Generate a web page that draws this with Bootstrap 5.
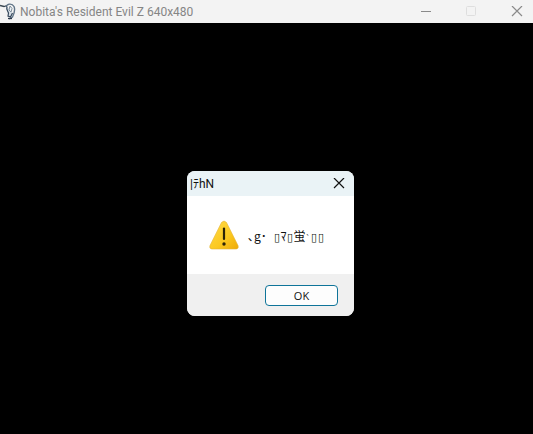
<!DOCTYPE html>
<html lang="ja">
<head>
<meta charset="utf-8">
<meta name="viewport" content="width=device-width, initial-scale=1">
<title>Nobita's Resident Evil Z 640x480</title>
<link href="https://cdn.jsdelivr.net/npm/bootstrap@5.3.0/dist/css/bootstrap.min.css" rel="stylesheet">
<style>
body { background: #000; font-family: "Noto Sans", "Noto Sans CJK JP", sans-serif; font-size: 12px; line-height: 16px; color: #111; }
.titlebar { background: #f3f3f3; color: #858585; height: 23px; }
.app-title { font-family: Roboto, sans-serif; font-size: 12px; padding-left: 4px; }
.caption-btn { width: 46px; height: 22px; color: #8a8a8a; }
.caption-btn:disabled { opacity: 1; color: #dedede; border: 0; }
.caption-group { margin-right: -7px; }
.stage { padding-top: 30px; }
.dialog-box { width: 167px; border-radius: 8px; background: #fff; }
.dialog-head { background: #eaf3f6; height: 25px; padding-left: 3px; }
.dialog-title { font-family: Roboto, "Noto Sans CJK JP", sans-serif; font-size: 12px; padding-top: 1px; }
.dialog-close { width: 30px; height: 25px; color: #111; }
.dialog-text { height: 78px; padding-left: 22px; gap: 9px; }
.message { font-family: "Noto Sans CJK JP", sans-serif; white-space: pre; padding-top: 1px; }
.unknown { font-family: "DejaVu Sans", sans-serif; font-size: 11px; line-height: 12px; display: inline-block; width: 7px; text-align: center; }
.tick-mark { font-size: 8px; line-height: 12px; display: inline-block; width: 5px; }
.dialog-foot { background: #f0f0f0; height: 42px; padding-right: 16px; }
.ok-btn { width: 73px; height: 21px; border: 1px solid #0f7499; border-radius: 4px; background: #fdfdfd; font-size: 11px; font-family: "Open Sans", sans-serif; color: #111; }
</style>
</head>
<body class="d-flex flex-column vh-100 overflow-hidden">
<header class="titlebar d-flex align-items-center flex-shrink-0">
  <svg width="16" height="20" viewBox="0 0 16 20" fill="none" aria-hidden="true">
    <path d="M0 3.500L4 4.500L7 3.500" stroke="#394650" stroke-width="1.300"/>
    <path d="M6 5C7 1.500 12 1 14 4.500C15.500 8 14 12 12.500 15L9 17" stroke="#5f7386" stroke-width="1.400"/>
    <path d="M7 4.500C6 7 7.500 8.500 8.500 11L8 14L10.500 15L12.500 11" fill="#d6dfe6" stroke="#34465a" stroke-width="1.200"/>
    <path d="M10 4L12 6.500L11 10L9 8Z" fill="#eef3f6" stroke="#7d8d9b"/>
    <path d="M8 16.500H12" stroke="#2b3a4c" stroke-width="1.300"/>
  </svg>
  <h1 class="app-title fw-normal m-0 lh-1">Nobita's Resident Evil Z 640x480</h1>
  <div class="caption-group d-flex ms-auto">
    <button type="button" class="caption-btn btn p-0 border-0 d-flex align-items-center justify-content-center" aria-label="Minimize">
      <svg width="12" height="12" viewBox="0 0 12 12" stroke="currentColor"><path d="M2 5.500H12"/></svg>
    </button>
    <button type="button" disabled class="caption-btn btn p-0 border-0 d-flex align-items-center justify-content-center" aria-label="Maximize">
      <svg width="12" height="12" viewBox="0 0 12 12" fill="none" stroke="currentColor"><rect x="1.500" y=".5" width="9" height="9" rx="1"/></svg>
    </button>
    <button type="button" class="caption-btn btn p-0 border-0 d-flex align-items-center justify-content-center" aria-label="Close">
      <svg width="12" height="12" viewBox="0 0 12 12" stroke="currentColor" stroke-width="1.200"><path d="M1 0L11 10M11 0L1 10"/></svg>
    </button>
  </div>
</header>
<main class="stage flex-grow-1 d-flex align-items-center justify-content-center">
  <section class="dialog-box overflow-hidden ms-2" role="alertdialog" aria-labelledby="dlgTitle" aria-describedby="dlgText">
    <div class="dialog-head d-flex align-items-center justify-content-between">
      <h2 id="dlgTitle" class="dialog-title fw-normal m-0">|ﾃhN</h2>
      <button type="button" class="dialog-close btn p-0 border-0 d-flex align-items-center justify-content-center" aria-label="Close dialog">
        <svg width="12" height="12" viewBox="0 0 12 12" stroke="currentColor" stroke-width="1.200"><path d="M1 0L11 10M11 0L1 10"/></svg>
      </button>
    </div>
    <div class="dialog-text d-flex align-items-center">
      <svg width="30" height="30" viewBox="0 0 30 30" aria-hidden="true">
        <defs><linearGradient id="warn" x1="0" y1="0" x2="1" y2="1"><stop offset="0" stop-color="#ffdc4a"/><stop offset=".6" stop-color="#fbc81f"/><stop offset="1" stop-color="#eeaa08"/></linearGradient></defs>
        <path d="M12.500 2.500Q15 -.5 17.500 2.500L29 25.500Q30 29 26.500 29H3.500Q0 29 1 25.500Z" fill="url(#warn)" stroke="#e5b53a" stroke-width=".6"/>
        <path d="M15 8.500V19" stroke="#2c2408" stroke-width="2.200" stroke-linecap="round"/>
        <circle cx="15" cy="24" r="1.700" fill="#2c2408"/>
      </svg>
      <p id="dlgText" class="message m-0">､g･ <span class="unknown ms-1">▯</span>ﾏ<span class="unknown">▯</span>蛍<span class="tick-mark">`</span><span class="unknown">▯</span><span class="unknown">▯</span></p>
    </div>
    <div class="dialog-foot d-flex align-items-center justify-content-end">
      <button type="button" class="ok-btn btn p-0 lh-1">OK</button>
    </div>
  </section>
</main>
<script src="https://cdn.jsdelivr.net/npm/bootstrap@5.3.0/dist/js/bootstrap.bundle.min.js"></script>
</body>
</html>
